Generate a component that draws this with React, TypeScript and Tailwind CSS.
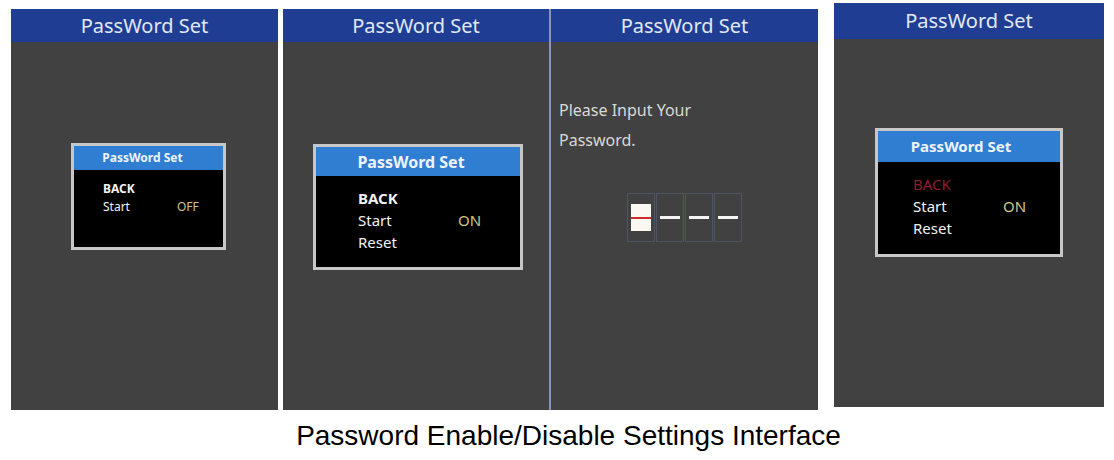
import React from "react";

const ui = { fontFamily: '"Noto Sans", "Open Sans", sans-serif' };

type Row = { label: string; value?: string; bold?: boolean; red?: boolean };

function Header({ h }: { h: string }) {
  return (
    <div
      className={`${h} bg-[#1f3e93] flex items-center justify-center text-[20px] text-[#e2e8f6]`}
    >
      PassWord Set
    </div>
  );
}

function Dialog({
  box,
  title,
  rows,
  size,
  col,
}: {
  box: string;
  title: string;
  rows: Row[];
  size: string;
  col: string;
}) {
  return (
    <div className={`${box} border-[3px] border-[#c7c7c7] bg-black flex flex-col`}>
      <div className={`${title} bg-[#2f7ed2] flex items-center justify-center font-bold text-[#eef4ff]`}>
        PassWord Set
      </div>
      <div className={size}>
        {rows.map((r) => (
          <div key={r.label} className="flex">
            <span
              className={`${col} ${r.bold ? "font-bold" : ""} ${r.red ? "text-[#8e1d2e]" : "text-[#f2f2f2]"}`}
            >
              {r.label}
            </span>
            {r.value && <span className="text-[#cfc68a]">{r.value}</span>}
          </div>
        ))}
      </div>
    </div>
  );
}

function Cell({ first }: { first?: boolean }) {
  return (
    <div className="w-[28px] h-[49px] border border-[#4c5465] flex items-center justify-center">
      {first ? (
        <div className="w-[20px] h-[27px] bg-[#fbf8f2] flex items-center">
          <div className="w-full h-[2px] bg-[#d02a2a]" />
        </div>
      ) : (
        <div className="w-[20px] h-[3px] bg-[#f4f4f4]" />
      )}
    </div>
  );
}

export default function App() {
  return (
    <div className="w-[1114px] h-[460px] bg-white overflow-hidden" style={ui}>
      <div className="flex items-start pl-[11px] pt-[3px]">
        {/* screen 1 */}
        <div className="mt-[6px] w-[267px] h-[401px] bg-[#414141] flex flex-col">
          <Header h="h-[33px]" />
          <div className="mt-[101px] ml-[60px]">
            <Dialog
              box="w-[155px] h-[107px]"
              title="h-[24px] text-[12px] pr-[12px]"
              size="pt-[10px] pl-[29px] text-[12px] leading-[18px]"
              col="w-[74px]"
              rows={[
                { label: "BACK", bold: true },
                { label: "Start", value: "OFF" },
              ]}
            />
          </div>
        </div>

        {/* screens 2 + 3 */}
        <div className="ml-[5px] mt-[6px] flex h-[401px]">
          <div className="w-[266px] bg-[#414141] flex flex-col">
            <Header h="h-[33px]" />
            <div className="mt-[102px] ml-[30px]">
              <Dialog
                box="w-[210px] h-[126px]"
                title="h-[29px] text-[16px] pr-[14px]"
                size="pt-[11px] pl-[42px] text-[15px] leading-[22px]"
                col="w-[100px]"
                rows={[
                  { label: "BACK", bold: true },
                  { label: "Start", value: "ON" },
                  { label: "Reset" },
                ]}
              />
            </div>
          </div>
          <div className="w-[2px] bg-[#8797ba]" />
          <div className="w-[267px] bg-[#414141] flex flex-col">
            <Header h="h-[33px]" />
            <div className="pt-[53px] pl-[8px] text-[16px] leading-[30px] text-[#d9d9d9]">
              <div>Please Input Your</div>
              <div>Password.</div>
            </div>
            <div className="mt-[38px] ml-[76px] flex gap-[1px]">
              <Cell first />
              <Cell />
              <Cell />
              <Cell />
            </div>
          </div>
        </div>

        {/* screen 4 */}
        <div className="ml-[16px] w-[270px] h-[404px] bg-[#414141] flex flex-col">
          <Header h="h-[36px]" />
          <div className="mt-[89px] ml-[41px]">
            <Dialog
              box="w-[188px] h-[129px]"
              title="h-[31px] text-[15px] pr-[16px]"
              size="pt-[11px] pl-[35px] text-[15px] leading-[22px]"
              col="w-[90px]"
              rows={[
                { label: "BACK", red: true },
                { label: "Start", value: "ON" },
                { label: "Reset" },
              ]}
            />
          </div>
        </div>
      </div>

      <div
        className="mt-[10px] pl-[23px] text-center text-[28px] leading-[32px] text-black"
        style={{ fontFamily: '"Liberation Sans", Arial, sans-serif' }}
      >
        Password Enable/Disable Settings Interface
      </div>
    </div>
  );
}
